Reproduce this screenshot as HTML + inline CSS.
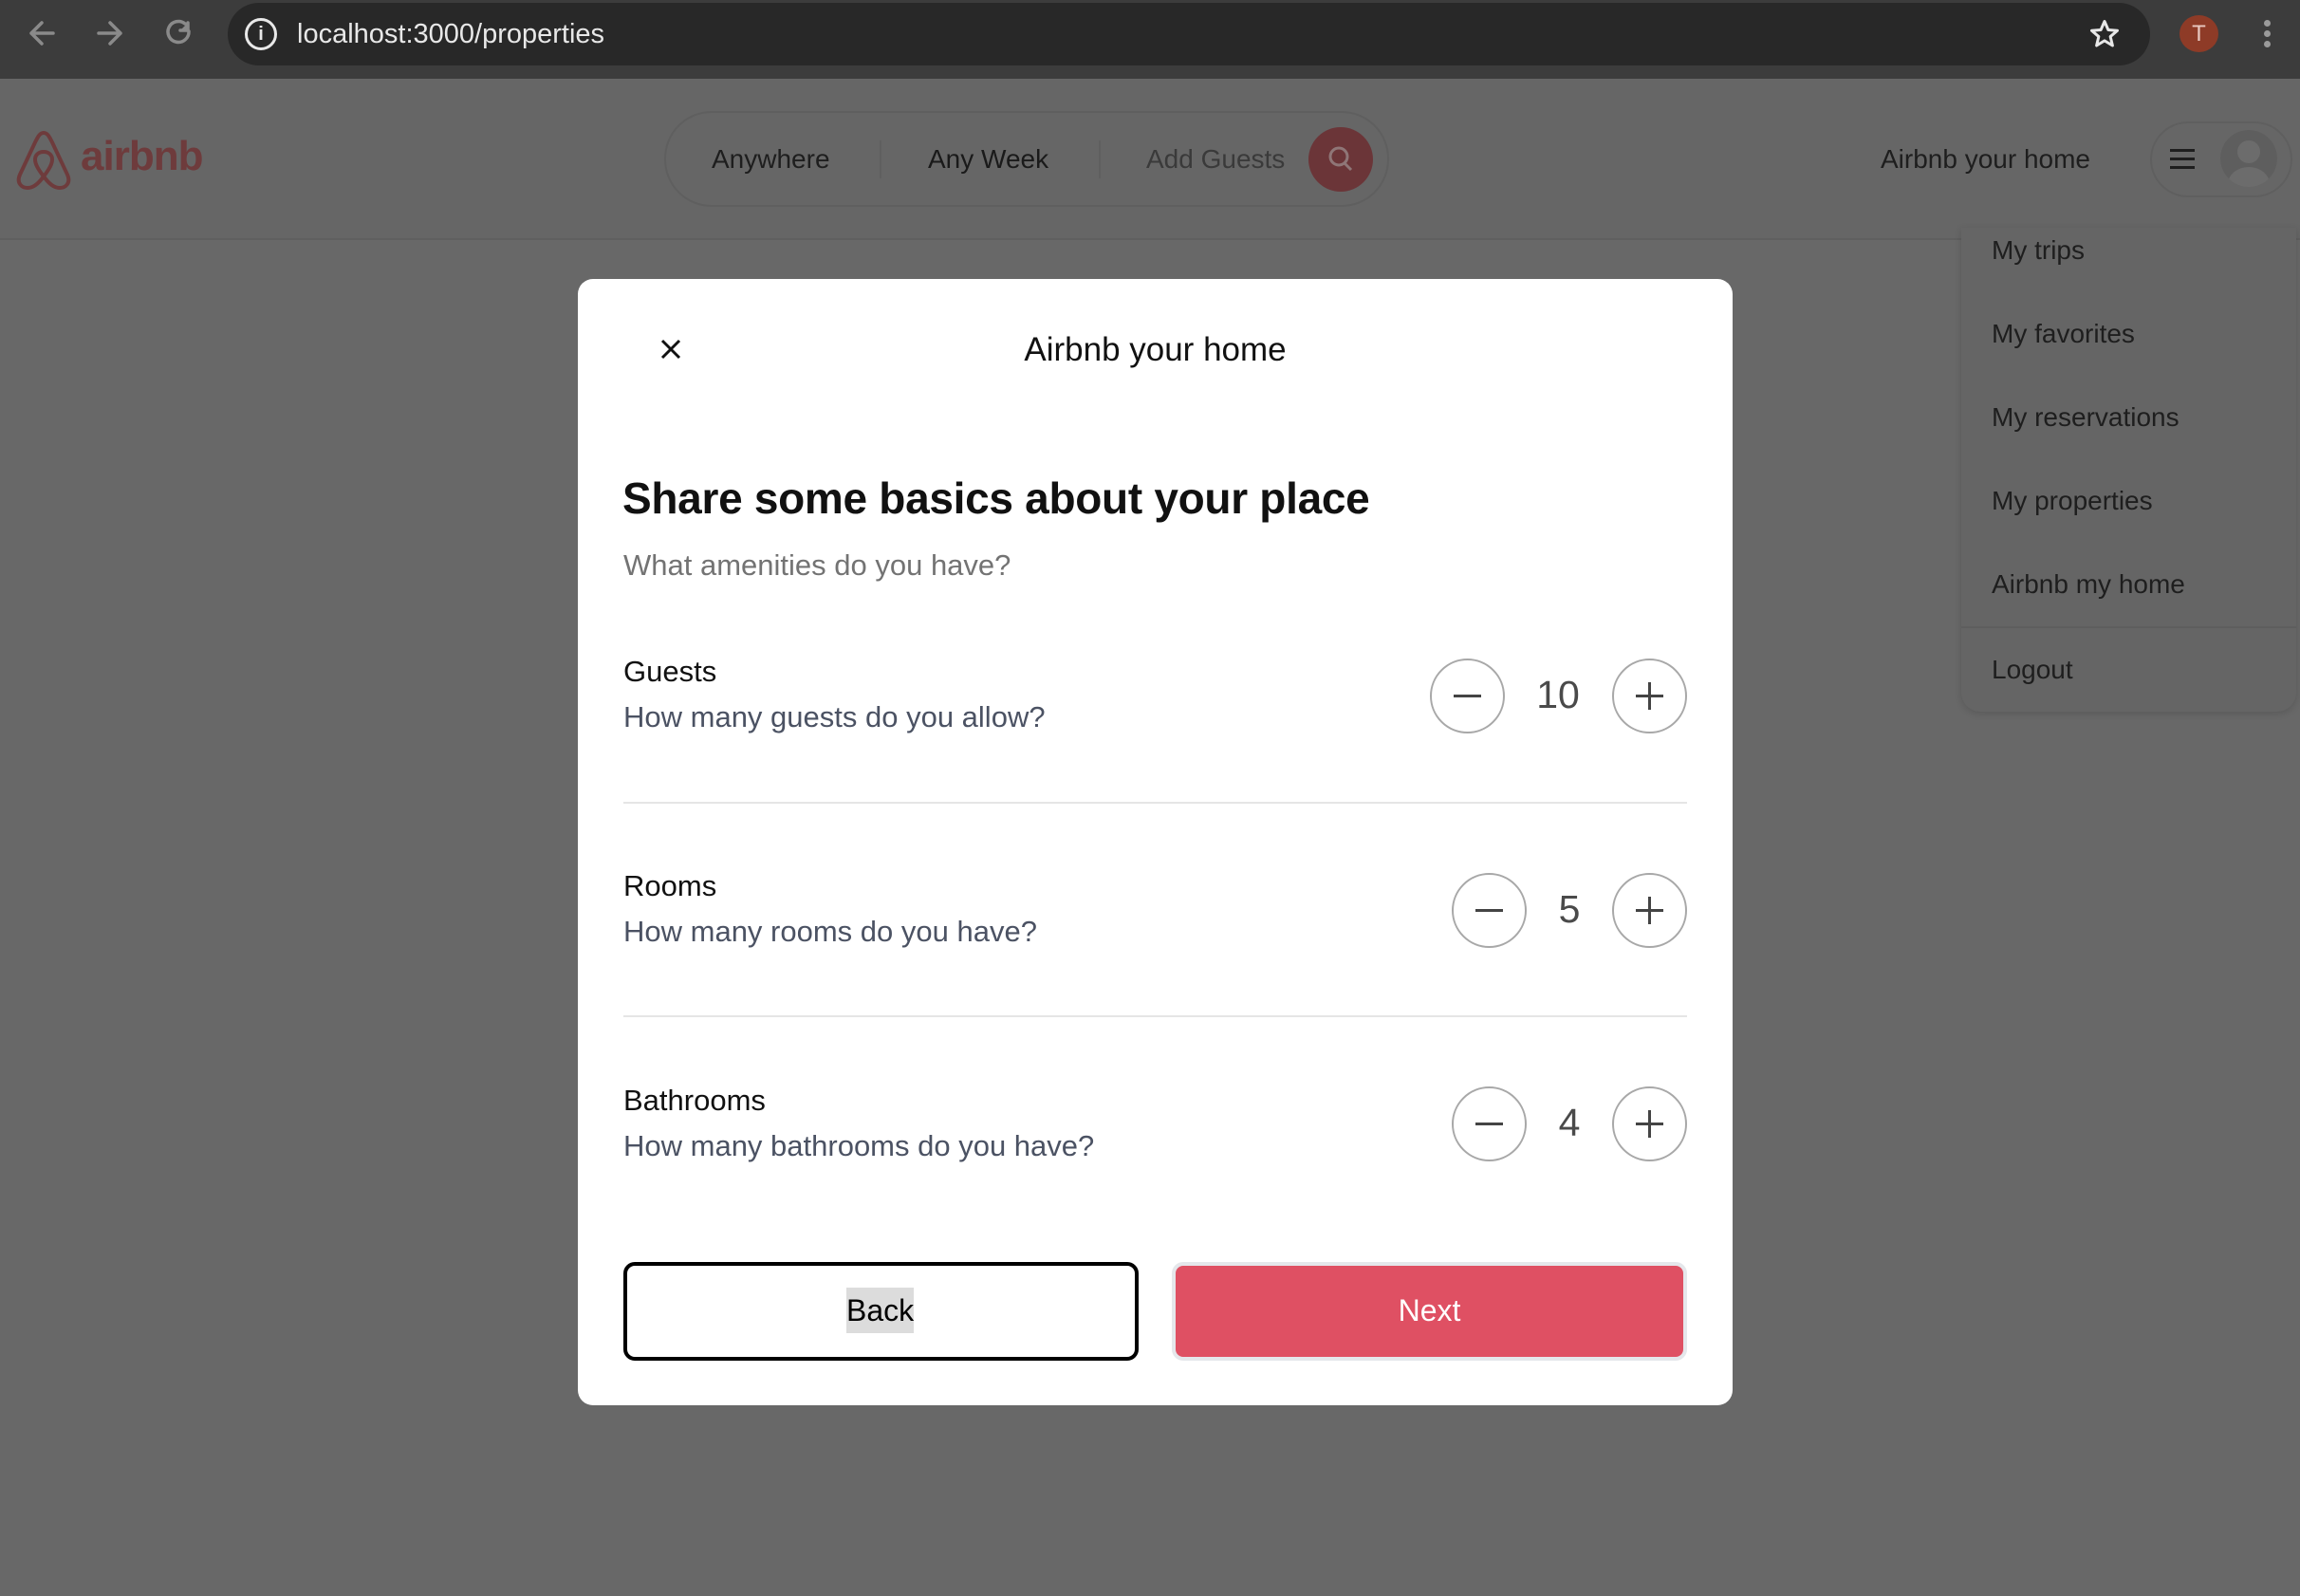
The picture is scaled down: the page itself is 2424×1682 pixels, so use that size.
<!DOCTYPE html>
<html><head><meta charset="utf-8"><style>
*{box-sizing:border-box;margin:0;padding:0}
body{width:2424px;height:1682px;overflow:hidden;background:#686868;font-family:"Liberation Sans",sans-serif;position:relative}
.abs{position:absolute}
.chrome{left:0;top:0;width:2424px;height:83px;background:#3c3c3c}
.url{left:240px;top:3px;width:2026px;height:66px;background:#282828;border-radius:33px}
.hdr{left:0;top:83px;width:2424px;height:170px;background:#666;border-bottom:2px solid #5f5f5f}
.t{white-space:nowrap}
.menu{left:2067px;top:240px;width:353px;height:510px;background:#656565;border-radius:0 0 20px 20px;box-shadow:0 2px 8px rgba(0,0,0,.15)}
.mi{left:32px;font-size:28px;color:#1e1e1e}
.modal{left:609px;top:294px;width:1217px;height:1187px;background:#fff;border-radius:16px}
.lbl{left:48px;font-size:31px;color:#111}
.sub{left:48px;font-size:31px;color:#4b5263}
.cb{width:79px;height:79px;border:2px solid #a8a8a8;border-radius:50%;background:#fff}
.num{font-size:41px;color:#4a4a4a;text-align:center;width:80px}
.div{left:48px;width:1121px;height:2px;background:#e5e5e5}
</style></head><body>
<div class="abs chrome"></div>
<svg class="abs" style="left:0;top:0" width="230" height="70" viewBox="0 0 230 70" fill="none" stroke="#8a8a8a" stroke-width="3.5" stroke-linecap="round" stroke-linejoin="round">
<path d="M56 35H33M44 24L33 35l11 11"/>
<path d="M104 35h23M116 24l11 11-11 11"/>
<path d="M199 33a11 11 0 1 1-4-8"/><path d="M198 24v8h-8" fill="#8a8a8a"/>
</svg>
<div class="abs url"></div>
<div class="abs" style="left:258px;top:19px;width:34px;height:34px;border:3px solid #e8e8e8;border-radius:50%;color:#e8e8e8;font-size:20px;font-weight:bold;text-align:center;line-height:28px">i</div>
<div class="abs t" style="left:313px;top:20px;font-size:29px;color:#e8e8e8">localhost:3000/properties</div>
<svg class="abs" style="left:2200px;top:18px" width="36" height="36" viewBox="0 0 24 24"><path d="M12 3l2.6 6 6.4.5-4.9 4.2 1.5 6.3L12 16.6 6.4 20l1.5-6.3L3 9.5 9.4 9z" fill="none" stroke="#e8e8e8" stroke-width="2" stroke-linejoin="round"/></svg>
<div class="abs" style="left:2297px;top:16px;width:41px;height:39px;border-radius:50%;background:#8e3b27;color:#e8c8c0;font-size:24px;text-align:center;line-height:39px">T</div>
<div class="abs" style="left:2386px;top:21px;width:7px;height:7px;border-radius:50%;background:#9a9a9a;box-shadow:0 11px 0 #9a9a9a,0 22px 0 #9a9a9a"></div>

<div class="abs hdr"></div>
<svg class="abs" style="left:15px;top:136px" width="62" height="64" viewBox="0 0 62 64" fill="none" stroke="#6e3b3c" stroke-width="4"><path d="M31 4C27 4 25 8 22 14L6 48c-4 9 2 14 8 14 6 0 11-4 17-12 6 8 11 12 17 12 6 0 12-5 8-14L40 14C37 8 35 4 31 4z"/><path d="M31 50c-6-8-9-13-9-18 0-5 4-8 9-8s9 3 9 8c0 5-3 10-9 18z"/></svg>
<div class="abs t" style="left:85px;top:140px;font-size:44px;font-weight:bold;color:#6e3b3c;letter-spacing:-1px">airbnb</div>
<div class="abs" style="left:700px;top:117px;width:764px;height:101px;border:2px solid #5f5f5f;border-radius:50px"></div>
<div class="abs t" style="left:750px;top:152px;font-size:28px;color:#1e1e1e">Anywhere</div>
<div class="abs" style="left:927px;top:148px;width:2px;height:40px;background:#5f5f5f"></div>
<div class="abs t" style="left:978px;top:152px;font-size:28px;color:#1a1a1a">Any Week</div>
<div class="abs" style="left:1158px;top:148px;width:2px;height:40px;background:#5f5f5f"></div>
<div class="abs t" style="left:1208px;top:152px;font-size:28px;color:#3a3a3a">Add Guests</div>
<div class="abs" style="left:1379px;top:134px;width:68px;height:68px;border-radius:50%;background:#6b3538"></div>
<svg class="abs" style="left:1395px;top:150px" width="36" height="36" viewBox="0 0 36 36" fill="none" stroke="#8f7677" stroke-width="3"><circle cx="16" cy="15" r="9"/><path d="M22 22l7 7"/></svg>
<div class="abs t" style="left:1982px;top:152px;font-size:28px;color:#1e1e1e">Airbnb your home</div>
<div class="abs" style="left:2266px;top:128px;width:150px;height:80px;border:2px solid #5f5f5f;border-radius:40px"></div>
<div class="abs" style="left:2287px;top:157px;width:26px;height:3px;background:#1e1e1e;box-shadow:0 9px 0 #1e1e1e,0 18px 0 #1e1e1e"></div>
<svg class="abs" style="left:2339px;top:136px" width="62" height="62" viewBox="0 0 62 62"><clipPath id="c"><circle cx="31" cy="31" r="30"/></clipPath><g clip-path="url(#c)" fill="#5e5e5e"><circle cx="31" cy="31" r="30"/></g><g clip-path="url(#c)" fill="#6c6c6c"><circle cx="31" cy="24" r="12"/><ellipse cx="31" cy="58" rx="22" ry="18"/></g></svg>

<div class="abs menu">
<div class="abs mi t" style="top:8px">My trips</div>
<div class="abs mi t" style="top:96px">My favorites</div>
<div class="abs mi t" style="top:184px">My reservations</div>
<div class="abs mi t" style="top:272px">My properties</div>
<div class="abs mi t" style="top:360px">Airbnb my home</div>
<div class="abs" style="left:0;top:420px;width:353px;height:2px;background:#5e5e5e"></div>
<div class="abs mi t" style="top:450px">Logout</div>
</div>

<div class="abs modal">
<svg class="abs" style="left:86px;top:62px" width="24" height="24" viewBox="0 0 24 24" stroke="#111" stroke-width="3"><path d="M3 3l18 18M21 3L3 21"/></svg>
<div class="abs t" style="left:0;width:1217px;text-align:center;top:55px;font-size:35px;color:#111">Airbnb your home</div>
<div class="abs t" style="left:47px;top:204px;font-size:46px;font-weight:bold;color:#111;letter-spacing:-0.3px">Share some basics about your place</div>
<div class="abs t" style="left:48px;top:284px;font-size:31px;color:#737373">What amenities do you have?</div>

<div class="abs lbl t" style="top:396px">Guests</div>
<div class="abs sub t" style="top:444px">How many guests do you allow?</div>
<div class="abs cb" style="left:898px;top:400px"></div>
<div class="abs" style="left:923px;top:438px;width:29px;height:3px;background:#444"></div>
<div class="abs num" style="left:993px;top:415px">10</div>
<div class="abs cb" style="left:1090px;top:400px"></div>
<div class="abs" style="left:1115px;top:438px;width:29px;height:3px;background:#444"></div>
<div class="abs" style="left:1128px;top:425px;width:3px;height:29px;background:#444"></div>
<div class="abs div" style="top:551px"></div>

<div class="abs lbl t" style="top:622px">Rooms</div>
<div class="abs sub t" style="top:670px">How many rooms do you have?</div>
<div class="abs cb" style="left:921px;top:626px"></div>
<div class="abs" style="left:946px;top:664px;width:29px;height:3px;background:#444"></div>
<div class="abs num" style="left:1005px;top:641px">5</div>
<div class="abs cb" style="left:1090px;top:626px"></div>
<div class="abs" style="left:1115px;top:664px;width:29px;height:3px;background:#444"></div>
<div class="abs" style="left:1128px;top:651px;width:3px;height:29px;background:#444"></div>
<div class="abs div" style="top:776px"></div>

<div class="abs lbl t" style="top:848px">Bathrooms</div>
<div class="abs sub t" style="top:896px">How many bathrooms do you have?</div>
<div class="abs cb" style="left:921px;top:851px"></div>
<div class="abs" style="left:946px;top:889px;width:29px;height:3px;background:#444"></div>
<div class="abs num" style="left:1005px;top:866px">4</div>
<div class="abs cb" style="left:1090px;top:851px"></div>
<div class="abs" style="left:1115px;top:889px;width:29px;height:3px;background:#444"></div>
<div class="abs" style="left:1128px;top:876px;width:3px;height:29px;background:#444"></div>

<div class="abs" style="left:48px;top:1036px;width:543px;height:104px;border:4px solid #000;border-radius:12px;background:#fff"></div>
<div class="abs t" style="left:283px;top:1063px;padding:2px 0;background:#dcdcdc;font-size:32px;color:#000;line-height:44px">Back</div>
<div class="abs" style="left:626px;top:1036px;width:543px;height:104px;border:4px solid #e5e7eb;border-radius:12px;background:#df5063"></div>
<div class="abs t" style="left:626px;width:543px;text-align:center;top:1065px;font-size:32px;color:#fff;line-height:44px">Next</div>
</div>
</body></html>
